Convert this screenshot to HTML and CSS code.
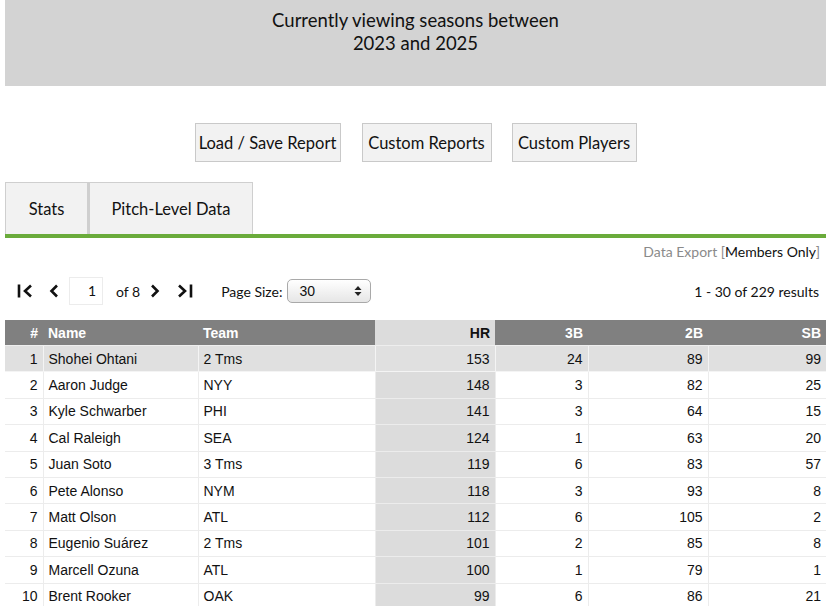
FILE: index.html
```html
<!DOCTYPE html>
<html>
<head>
<meta charset="utf-8">
<link rel="stylesheet" href="styles.css">
</head>
<body>
<div class="page">
  <div class="banner">
    <div class="banner-text">Currently viewing seasons between<br>2023 and 2025</div>
  </div>

  <div class="actions">
    <button class="btn btn-load">Load / Save Report</button>
    <button class="btn btn-reports">Custom Reports</button>
    <button class="btn btn-players">Custom Players</button>
  </div>

  <div class="tabs">
    <div class="tab tab-stats">Stats</div>
    <div class="tab tab-pitch">Pitch-Level Data</div>
  </div>
  <div class="tab-bar"></div>

  <div class="export"><span class="muted">Data Export [</span>Members Only<span class="muted">]</span></div>

  <div class="pager">
    <div class="pager-left">
      <svg class="ico ico-first" width="18" height="16" viewBox="0 0 18 16"><path d="M2 1.5v13" stroke="#111" stroke-width="2.6" fill="none"/><path d="M14 2.5 8 8l6 5.5" stroke="#111" stroke-width="2.6" fill="none"/></svg>
      <svg class="ico ico-prev" width="12" height="16" viewBox="0 0 12 16"><path d="M9 2.5 3.5 8 9 13.5" stroke="#111" stroke-width="2.6" fill="none"/></svg>
      <div class="page-input">1</div>
      <span class="of">of 8</span>
      <svg class="ico ico-next" width="12" height="16" viewBox="0 0 12 16"><path d="M3 2.5 8.5 8 3 13.5" stroke="#111" stroke-width="2.6" fill="none"/></svg>
      <svg class="ico ico-last" width="18" height="16" viewBox="0 0 18 16"><path d="M3 2.5 9 8l-6 5.5" stroke="#111" stroke-width="2.6" fill="none"/><path d="M15 1.5v13" stroke="#111" stroke-width="2.6" fill="none"/></svg>
      <span class="ps-label">Page Size:</span>
      <div class="select">
        <span>30</span>
        <svg width="8" height="12" viewBox="0 0 8 12"><path d="M4 1 7.5 5h-7z M4 11 7.5 7h-7z" fill="#222"/></svg>
      </div>
    </div>
    <div class="results">1 - 30 of 229 results</div>
  </div>

  <table class="grid">
    <colgroup>
      <col class="c-num"><col class="c-name"><col class="c-team"><col class="c-hr"><col class="c-3b"><col class="c-2b"><col class="c-sb">
    </colgroup>
    <thead>
      <tr>
        <th class="r">#</th><th class="l">Name</th><th class="l">Team</th><th class="r sorted">HR</th><th class="r">3B</th><th class="r">2B</th><th class="r">SB</th>
      </tr>
    </thead>
    <tbody>
      <tr class="hl"><td class="r">1</td><td>Shohei Ohtani</td><td>2 Tms</td><td class="r hrc">153</td><td class="r">24</td><td class="r">89</td><td class="r">99</td></tr>
      <tr><td class="r">2</td><td>Aaron Judge</td><td>NYY</td><td class="r hrc">148</td><td class="r">3</td><td class="r">82</td><td class="r">25</td></tr>
      <tr><td class="r">3</td><td>Kyle Schwarber</td><td>PHI</td><td class="r hrc">141</td><td class="r">3</td><td class="r">64</td><td class="r">15</td></tr>
      <tr><td class="r">4</td><td>Cal Raleigh</td><td>SEA</td><td class="r hrc">124</td><td class="r">1</td><td class="r">63</td><td class="r">20</td></tr>
      <tr><td class="r">5</td><td>Juan Soto</td><td>3 Tms</td><td class="r hrc">119</td><td class="r">6</td><td class="r">83</td><td class="r">57</td></tr>
      <tr><td class="r">6</td><td>Pete Alonso</td><td>NYM</td><td class="r hrc">118</td><td class="r">3</td><td class="r">93</td><td class="r">8</td></tr>
      <tr><td class="r">7</td><td>Matt Olson</td><td>ATL</td><td class="r hrc">112</td><td class="r">6</td><td class="r">105</td><td class="r">2</td></tr>
      <tr><td class="r">8</td><td>Eugenio Suárez</td><td>2 Tms</td><td class="r hrc">101</td><td class="r">2</td><td class="r">85</td><td class="r">8</td></tr>
      <tr><td class="r">9</td><td>Marcell Ozuna</td><td>ATL</td><td class="r hrc">100</td><td class="r">1</td><td class="r">79</td><td class="r">1</td></tr>
      <tr><td class="r">10</td><td>Brent Rooker</td><td>OAK</td><td class="r hrc">99</td><td class="r">6</td><td class="r">86</td><td class="r">21</td></tr>
    </tbody>
  </table>
</div>
</body>
</html>
```

FILE: styles.css
```css
html, body {
  margin: 0;
  padding: 0;
  background: #fff;
}

.page {
  width: 821px;
  margin-left: 5px;
  font-family: Lato, "Open Sans", sans-serif;
  color: #111;
}

.banner {
  background: #d3d3d3;
  height: 86px;
  box-sizing: border-box;
  padding-top: 9px;
  text-align: center;
}

.banner-text {
  font-size: 18.5px;
  line-height: 23px;
  color: #111;
}

.actions {
  display: flex;
  justify-content: center;
  gap: 20px;
  margin-top: 37px;
}

.btn {
  font-family: Lato, sans-serif;
  font-size: 16.5px;
  color: #111;
  background: #f2f2f2;
  border: 1px solid #c9c9c9;
  height: 39px;
  padding: 0;
  margin: 0;
  box-sizing: border-box;
  white-space: nowrap;
}
.btn-load { width: 146px; }
.btn-reports { width: 130px; margin-left: 1px; }
.btn-players { width: 125px; }

.tabs {
  display: flex;
  margin-top: 20px;
}

.tab {
  height: 52px;
  box-sizing: border-box;
  border: 1px solid #cfcfcf;
  border-bottom: none;
  background: #f2f2f2;
  font-size: 16.5px;
  display: flex;
  align-items: center;
  justify-content: center;
}
.tab-stats { width: 83px; }
.tab-pitch { width: 165px; border-left: 2px solid #cfcfcf; }

.tab-bar {
  height: 4px;
  background: #6aab3b;
}

.export {
  text-align: right;
  font-size: 14px;
  padding-right: 6px;
  margin-top: 5px;
  line-height: 18px;
}
.muted { color: #8a8a8a; }

.pager {
  display: flex;
  justify-content: space-between;
  align-items: center;
  margin-top: 16px;
  height: 28px;
  font-size: 14px;
}

.pager-left {
  display: flex;
  align-items: center;
}

.ico { display: block; }
.ico-first { margin-left: 12px; }
.ico-prev { margin-left: 13px; }
.page-input {
  width: 34px;
  height: 28px;
  box-sizing: border-box;
  border: 1px solid #ececec;
  text-align: right;
  padding-right: 6px;
  line-height: 26px;
  margin-left: 9px;
}
.of { margin-left: 13px; }
.ico-next { margin-left: 9px; }
.ico-last { margin-left: 15px; }

.ps-label { margin-left: 27px; }

.select {
  margin-left: 5px;
  width: 84px;
  height: 24px;
  box-sizing: border-box;
  border: 1px solid #a9a9a9;
  border-radius: 5px;
  background: linear-gradient(#ffffff, #e6e6e6);
  display: flex;
  align-items: center;
  justify-content: space-between;
  padding: 0 8px 0 11px;
  font-family: "Liberation Sans", Arial, sans-serif;
  font-size: 14px;
}

.results {
  padding-right: 7px;
}

.grid {
  margin-top: 15px;
  width: 821px;
  border-collapse: collapse;
  table-layout: fixed;
  font-family: "Liberation Sans", Arial, sans-serif;
  font-size: 14px;
  color: #111;
}

.c-num { width: 38px; }
.c-name { width: 155px; }
.c-team { width: 177px; }
.c-hr { width: 120px; }
.c-3b { width: 93px; }
.c-2b { width: 120px; }
.c-sb { width: 118px; }

.grid th {
  background: #808080;
  color: #fff;
  font-weight: bold;
  height: 25px;
  padding: 0 5px;
  border: none;
  border-bottom: 1px solid #eee;
}
.grid th.sorted {
  background: #dcdcdc;
  color: #111;
}

.grid td {
  height: 25.4px;
  padding: 0 5px;
  border: 1px solid #ececec;
  white-space: nowrap;
}
.grid td:first-child { border-left: none; }
.grid td:last-child { border-right: none; }

.grid td.hrc { background: #dcdcdc; }
.grid tr.hl td { background: #e0e0e0; }
.grid tr.hl td { border-color: #f4f4f4; }

.r { text-align: right; }
.l { text-align: left; }
```
